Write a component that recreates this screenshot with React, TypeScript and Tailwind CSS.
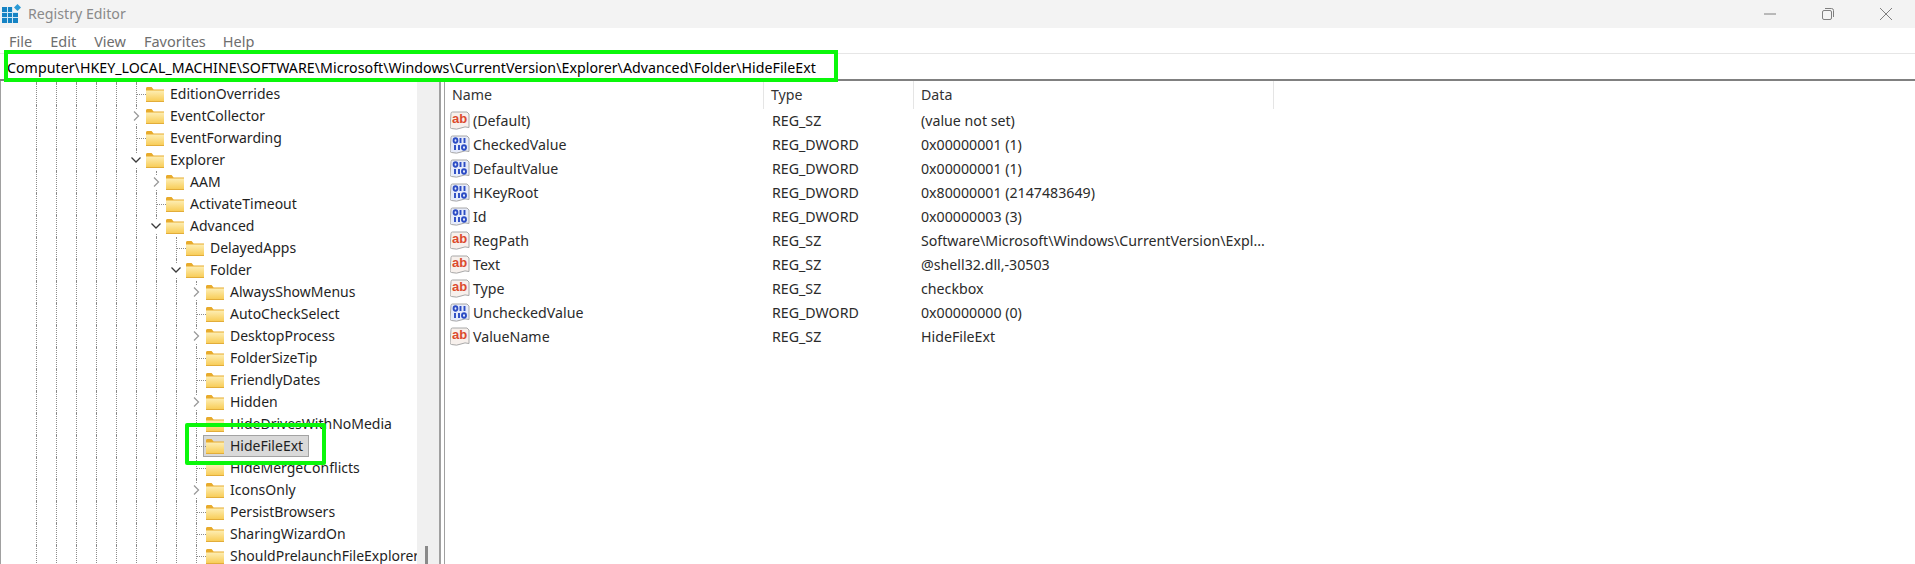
import React from "react";

const font = "font-['Noto_Sans','Open_Sans',sans-serif]";

type TreeItem = {
  depth: number;
  label: string;
  kind: "leaf" | "closed" | "open";
  selected?: boolean;
};

const treeItems: TreeItem[] = [
  { depth: 5, label: "EditionOverrides", kind: "leaf" },
  { depth: 5, label: "EventCollector", kind: "closed" },
  { depth: 5, label: "EventForwarding", kind: "leaf" },
  { depth: 5, label: "Explorer", kind: "open" },
  { depth: 6, label: "AAM", kind: "closed" },
  { depth: 6, label: "ActivateTimeout", kind: "leaf" },
  { depth: 6, label: "Advanced", kind: "open" },
  { depth: 7, label: "DelayedApps", kind: "leaf" },
  { depth: 7, label: "Folder", kind: "open" },
  { depth: 8, label: "AlwaysShowMenus", kind: "closed" },
  { depth: 8, label: "AutoCheckSelect", kind: "leaf" },
  { depth: 8, label: "DesktopProcess", kind: "closed" },
  { depth: 8, label: "FolderSizeTip", kind: "leaf" },
  { depth: 8, label: "FriendlyDates", kind: "leaf" },
  { depth: 8, label: "Hidden", kind: "closed" },
  { depth: 8, label: "HideDrivesWithNoMedia", kind: "leaf" },
  { depth: 8, label: "HideFileExt", kind: "leaf", selected: true },
  { depth: 8, label: "HideMergeConflicts", kind: "leaf" },
  { depth: 8, label: "IconsOnly", kind: "closed" },
  { depth: 8, label: "PersistBrowsers", kind: "leaf" },
  { depth: 8, label: "SharingWizardOn", kind: "leaf" },
  { depth: 8, label: "ShouldPrelaunchFileExplorer", kind: "leaf" },
];

const values = [
  { icon: "sz", name: "(Default)", type: "REG_SZ", data: "(value not set)" },
  { icon: "bin", name: "CheckedValue", type: "REG_DWORD", data: "0x00000001 (1)" },
  { icon: "bin", name: "DefaultValue", type: "REG_DWORD", data: "0x00000001 (1)" },
  { icon: "bin", name: "HKeyRoot", type: "REG_DWORD", data: "0x80000001 (2147483649)" },
  { icon: "bin", name: "Id", type: "REG_DWORD", data: "0x00000003 (3)" },
  { icon: "sz", name: "RegPath", type: "REG_SZ", data: "Software\\Microsoft\\Windows\\CurrentVersion\\Expl..." },
  { icon: "sz", name: "Text", type: "REG_SZ", data: "@shell32.dll,-30503" },
  { icon: "sz", name: "Type", type: "REG_SZ", data: "checkbox" },
  { icon: "bin", name: "UncheckedValue", type: "REG_DWORD", data: "0x00000000 (0)" },
  { icon: "sz", name: "ValueName", type: "REG_SZ", data: "HideFileExt" },
];

function AppIcon() {
  return (
    <svg width="20" height="20" viewBox="0 0 20 20" className="shrink-0">
      <rect x="0" y="3" width="16" height="16" fill="#1583c4" />
      <path d="M5.5 3v16M10.5 3v16M0 8.5h16M0 13.5h16" stroke="#cfe8f6" strokeWidth="1" />
      <rect x="11" y="3" width="5" height="5" fill="#f3f3f3" />
      <path d="M15.5 0l3.5 3.5-3.5 3.5-3.5-3.5z" fill="#2c9bd6" />
    </svg>
  );
}

function Folder() {
  return (
    <svg width="18" height="15" viewBox="0 0 18 15" className="shrink-0">
      <defs>
        <linearGradient id="folderFill" x1="0" y1="0" x2="0" y2="1">
          <stop offset="0" stopColor="#fdeeb4" />
          <stop offset="1" stopColor="#f8ca50" />
        </linearGradient>
      </defs>
      <path d="M0 1.5C0 .7.6 0 1.4 0h4.2l2 2.5H18V4H0z" fill="#e8ab2c" />
      <rect x="0" y="3.5" width="18" height="11.5" fill="url(#folderFill)" />
      <rect x="0" y="14" width="18" height="1" fill="#e2ad3a" />
    </svg>
  );
}

function Chevron({ open }: { open: boolean }) {
  return (
    <svg width="12" height="12" viewBox="0 0 12 12">
      {open ? (
        <path d="M1.5 3.5L6 8l4.5-4.5" fill="none" stroke="#3a3a3a" strokeWidth="1.3" />
      ) : (
        <path d="M4 1.5L8.5 6 4 10.5" fill="none" stroke="#9a9a9a" strokeWidth="1.3" />
      )}
    </svg>
  );
}

function Guides({ count }: { count: number }) {
  return (
    <>
      {Array.from({ length: count }).map((_, i) => (
        <div key={i} className="w-5 h-full shrink-0 border-l border-dotted border-[#8c8c8c]" />
      ))}
    </>
  );
}

function TreeRow({ item }: { item: TreeItem }) {
  return (
    <div className="flex items-center h-[22px] whitespace-nowrap">
      <Guides count={item.depth} />
      <div className="relative w-[10px] h-full shrink-0 border-l border-dotted border-[#8c8c8c] flex items-center">
        {item.kind === "leaf" ? (
          <div className="w-full border-t border-dotted border-[#8c8c8c]" />
        ) : (
          <div className="absolute left-[-7px] top-1 h-[14px] w-3 bg-white flex items-center justify-center">
            <Chevron open={item.kind === "open"} />
          </div>
        )}
      </div>
      {item.selected ? (
        <div className="flex items-center gap-[6px] h-full ml-[-3px] pl-[2px] pr-[5px] bg-[#d9d9d9] border border-[#a3a3a3]">
          <Folder />
          <span className="pb-[2px]">{item.label}</span>
        </div>
      ) : (
        <div className="flex items-center gap-[6px] h-full">
          <Folder />
          <span className="pb-[2px]">{item.label}</span>
        </div>
      )}
    </div>
  );
}

function SzIcon() {
  return (
    <svg width="20" height="20" viewBox="0 0 20 20" className="shrink-0">
      <path d="M1 2.5Q1 1 2.5 1H17l2 2v13.5q-4-1.5-8 .5t-9.5 .5L0 16.5z" fill="#f7f0ec" stroke="#a8a8a8" strokeWidth="1" />
      <text x="9.5" y="12" textAnchor="middle" fontSize="13" fontWeight="700" fill="#dc4a2e" fontFamily="Liberation Sans, sans-serif">
        ab
      </text>
    </svg>
  );
}

function BinIcon() {
  return (
    <svg width="20" height="20" viewBox="0 0 20 20" className="shrink-0">
      <path d="M1 2.5Q1 1 2.5 1H17l2 2v13.5q-4-1.5-8 .5t-9.5 .5L0 16.5z" fill="#e6ebfa" stroke="#a8a8a8" strokeWidth="1" />
      <g fill="none" stroke="#2c4cc4" strokeWidth="1.9">
        <ellipse cx="5.5" cy="5.5" rx="1.9" ry="2.2" />
        <path d="M10.5 3v5M14.5 3v5" />
        <path d="M5 10v5M9 10v5" />
        <ellipse cx="14" cy="12.5" rx="2" ry="2.2" />
      </g>
    </svg>
  );
}

export default function App() {
  return (
    <div className={`relative w-full h-screen overflow-hidden bg-white flex flex-col ${font}`}>
      <div className="h-[28px] shrink-0 bg-[#f3f3f3] flex items-center pl-[2px]">
        <AppIcon />
        <span className="ml-[6px] text-[14.2px] text-[#8a8a8a]">Registry Editor</span>
        <div className="ml-auto flex items-center text-[#7f7f7f]">
          <div className="w-[58px] flex justify-center">
            <svg width="14" height="14" viewBox="0 0 14 14">
              <path d="M1 7h12" stroke="currentColor" />
            </svg>
          </div>
          <div className="w-[58px] flex justify-center">
            <svg width="14" height="14" viewBox="0 0 14 14" fill="none" stroke="currentColor">
              <rect x="1.5" y="3.5" width="9" height="9" rx="1.5" />
              <path d="M4 1.5h6.5a2 2 0 0 1 2 2V10" />
            </svg>
          </div>
          <div className="w-[58px] flex justify-center">
            <svg width="14" height="14" viewBox="0 0 14 14">
              <path d="M1 1l12 12M13 1L1 13" stroke="currentColor" />
            </svg>
          </div>
        </div>
      </div>

      <div className="h-[25px] shrink-0 flex items-center gap-[18px] pl-[9px] pt-[2px] text-[14.5px] text-[#6e6e6e]">
        <span>File</span>
        <span>Edit</span>
        <span>View</span>
        <span>Favorites</span>
        <span className="ml-[-1px]">Help</span>
      </div>

      <div className="h-[28px] shrink-0 flex items-center pl-[7px] pt-[3px] border-t border-[#e6e6e6] border-b-2 border-b-[#808080] text-[14.2px] tracking-[0.035px] text-black whitespace-nowrap">
        Computer\HKEY_LOCAL_MACHINE\SOFTWARE\Microsoft\Windows\CurrentVersion\Explorer\Advanced\Folder\HideFileExt
      </div>

      <div className="flex-1 min-h-0 flex">
        <div className="w-[417px] shrink-0 overflow-hidden border-l border-[#a0a0a0] pl-[35px] text-[14px] text-[#1f1f1f]">
          <div className="flex h-[2px]">
            <Guides count={6} />
          </div>
          {treeItems.map((item) => (
            <TreeRow key={item.label} item={item} />
          ))}
        </div>

        <div className="w-[22px] shrink-0 bg-[#f0f0f0] flex flex-col justify-end pl-2">
          <div className="w-[3px] h-[18px] bg-[#8a8a8a]" />
        </div>
        <div className="w-[6px] shrink-0 border-l-2 border-r border-[#a0a0a0]" />

        <div className="flex-1 min-w-0 text-[14.2px] text-[#2b2b2b]">
          <div className="flex h-[28px] items-center text-[#333333]">
            <div className="w-[319px] h-full flex items-center pl-[7px] border-r border-[#e5e5e5]">Name</div>
            <div className="w-[150px] h-full flex items-center pl-[7px] border-r border-[#e5e5e5]">Type</div>
            <div className="w-[360px] h-full flex items-center pl-[7px] border-r border-[#e5e5e5]">Data</div>
          </div>
          {values.map((v) => (
            <div key={v.name} className="flex h-6 items-center whitespace-nowrap">
              <div className="w-[319px] flex items-center gap-[3px] pl-[5px]">
                {v.icon === "sz" ? <SzIcon /> : <BinIcon />}
                <span>{v.name}</span>
              </div>
              <div className="w-[150px] pl-2">{v.type}</div>
              <div className="w-[360px] pl-[7px]">{v.data}</div>
            </div>
          ))}
        </div>
      </div>

      <div className="absolute left-1 top-[50px] w-[834px] h-[32px] border-4 border-[#0af70a]" />
      <div className="absolute left-[185px] top-[423px] w-[141px] h-[42px] border-4 border-[#0af70a] rounded-[2px]" />
    </div>
  );
}
